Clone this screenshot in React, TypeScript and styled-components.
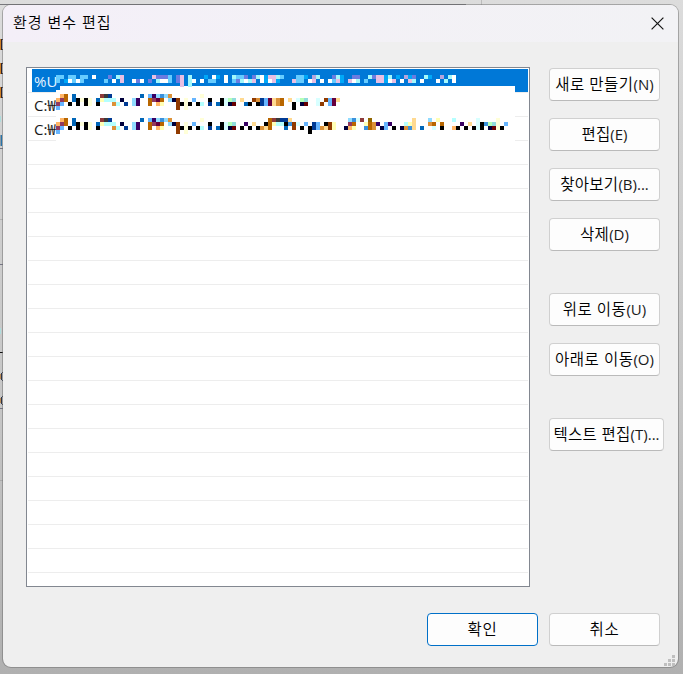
import React, {FC} from 'react'
import styled, {createGlobalStyle} from "styled-components";

interface CensorProps {
    lines: string[];
    top: number;
}

interface ButtonProps {
    $wide?: boolean;
    $primary?: boolean;
    $gap?: number;
    $spacing?: number;
}

const palette: Record<string, string> = {
    L: '#66ccff', A: '#00a8f8', W: '#ffffff', V: '#6c7ce0', O: '#b5a5dd', P: '#e8bfe2', C: '#a4f8fb',
    K: '#000000', k: '#3a3a3a', U: '#0066b8', N: '#003a94', n: '#00003c', D: '#380063', M: '#913a5e',
    m: '#66003c', R: '#903a00', r: '#8d3a3a', d: '#660000', B: '#b86600', o: '#dc9138', f: '#ffd990',
    F: '#ffb566', y: '#ffffd8', E: '#3a90dc', S: '#66b5ff', c: '#90dbff', a: '#b4ffff', t: '#d8ffff',
    g: '#b5ffb5', h: '#90dcdc', l: '#906600', Y: '#ffffb5',
}

// every token is "column:cells", a cell is 4px wide
const selectedCells = [
    '0:LL 3:LL 6:LL 9:W 13:V 15:CP 24:PVVVL 30:VP 33:C 37:A 39:WA 42:W 44:CLLV 49:VCWAPPCL 60:LLA 64:OC 69:VCA 74:VV 78:CVPPAC 85:A 87:OAV 92:CA 96:O 98:CW',
    '0:L 2:AWLWL 12:L 14:W 16:P 19:WVW 23:V 25:CWWL 30:VP 33:CW 36:W 38:LL 42:W 44:LVCWCP 51:WAWPA 59:PLL 63:WP 66:W 68:WLPA 73:PWC 77:L 80:PPAWP 86:W 88:PC 91:W 95:W 97:C 99:W',
    '31:P 33:C',
]

const pathStart = [
    '1:FB 4:U 11:rkN 21:U 23:SDcEc 28:o 36:y',
    '0:FMB 4:UKyKy 10:UYaaa 16:n 19:cD 23:BMmB 28:cnR 32:y 34:S 38:K 41:Ktgh',
    '0:MS 3:K 5:K 7:Ky 10:K 14:oa 17:N 19:cD 23:B 25:FY 30:RKyK 35:Ka 38:N 40:UKtnd',
    '0:S 30:R 32:y',
]

const firstPath = [
    '',
    '46:f 49:RoNSmfoB 58:f 60:tgh 65:t 67:RSmf',
    '47:UK 50:KNSmfoB 59:K 61:nd 65:tR 68:Sm',
    '59:K',
]

const secondPath = [
    '53:BrkNNf 73:cEt 76:r 78:l 89:f 93:c 95:Y 99:a 105:t 110:y',
    '47:D 49:f 52:KBYaaKER 60:t 62:S 64:NS 67:KRY 73:MB 77:YBoD 82:SD 87:aYf 93:oB 96:B 101:D 103:f 105:tKEghy 112:S',
    '46:K 48:K 50:KofB 57:U 59:R 61:K 63:KNSofRY 72:nFY 77:EBo 81:nS 84:K 86:noEf 91:U 94:t 96:K 99:FK 102:K 104:KtK 108:ndyK',
    '63:K',
]

const Censor: FC<CensorProps> = ({lines, top}) => (
    <>
        {lines.map((line, row) => line.split(' ').filter(Boolean).map(token => {
            const [start, cells] = token.split(':')
            return cells.split('').map((cell, i) => (
                <rect
                    key={`${row}-${start}-${i}`}
                    x={(Number(start) + i) * 4}
                    y={top + row * 4}
                    width={4}
                    height={4}
                    fill={palette[cell]}
                />
            ))
        }))}
    </>
)

const App: FC = () => {
    return (
        <>
            <GlobalStyle/>
            <Desktop>
                <Behind width="683" height="674" shapeRendering="crispEdges">
                    <rect x="0" y="4" width="466" height="1" fill="#77777c"/>
                    <rect x="481" y="0" width="1" height="5" fill="#bcbcbc"/>
                    {[39, 63, 87].map(y => (
                        <g key={y}>
                            <rect x="0" y={y} width="1" height="11" fill="#d08024"/>
                            <rect x="1" y={y} width="1" height="11" fill="#2c2430"/>
                            <rect x="2" y={y} width="1" height="1" fill="#2c2430"/>
                            <rect x="2" y={y + 10} width="1" height="1" fill="#2c2430"/>
                        </g>
                    ))}
                    <rect x="0" y="116" width="1" height="6" fill="#addcdc"/>
                    <rect x="0" y="135" width="1" height="11" fill="#8a9aa5"/>
                    <rect x="1" y="135" width="1" height="11" fill="#2673aa"/>
                    <rect x="0" y="148" width="3" height="1" fill="#747483"/>
                    <rect x="0" y="219" width="3" height="1" fill="#b2b2b2"/>
                    <rect x="0" y="264" width="3" height="1" fill="#747483"/>
                    <rect x="0" y="328" width="1" height="6" fill="#addcdc"/>
                    <rect x="0" y="352" width="3" height="1" fill="#111111"/>
                    {[372, 396].map(y => (
                        <g key={y}>
                            <rect x="0" y={y + 2} width="1" height="5" fill="#b98a55"/>
                            <rect x="1" y={y + 1} width="1" height="7" fill="#2f3548"/>
                            <rect x="2" y={y} width="1" height="1" fill="#2f3548"/>
                            <rect x="2" y={y + 8} width="1" height="1" fill="#2f3548"/>
                        </g>
                    ))}
                    <rect x="0" y="408" width="3" height="1" fill="#747483"/>
                    <rect x="0" y="480" width="3" height="1" fill="#aaaaaa"/>
                </Behind>
                <Dialog>
                    <TitleBar>
                        <Title>환경 변수 편집</Title>
                        <CloseIcon viewBox="0 0 13 13">
                            <path d="M.6.6 12.4 12.4M12.4.6.6 12.4" stroke="#1a1a1a" strokeWidth="1.25"/>
                        </CloseIcon>
                    </TitleBar>
                    <Content>
                        <List>
                            <Row $selected>%U</Row>
                            <Row>C:₩</Row>
                            <Row>C:₩</Row>
                            {Array.from({length: 18}, (_, i) => <Row key={i}/>)}
                            <Mask width="460" height="70" shapeRendering="crispEdges">
                                <path d="M4 11H459V69H0V15H4Z" fill="#fff"/>
                                <Censor lines={selectedCells} top={0}/>
                                <Censor lines={pathStart} top={19}/>
                                <Censor lines={firstPath} top={19}/>
                                <Censor lines={pathStart} top={43}/>
                                <Censor lines={secondPath} top={43}/>
                            </Mask>
                        </List>
                        <Actions>
                            <Button $spacing={0.5}>새로 만들기<Key>(N)</Key></Button>
                            <Button $spacing={0.2}>편집<Key>(E)</Key></Button>
                            <Button $spacing={0.3}>찾아보기<Key>(B)...</Key></Button>
                            <Button $spacing={0.3}>삭제<Key>(D)</Key></Button>
                            <Button $gap={25} $spacing={0.5}>위로 이동<Key>(U)</Key></Button>
                            <Button $spacing={0.5}>아래로 이동<Key>(O)</Key></Button>
                            <Button $gap={25} $spacing={0.3} $wide>텍스트 편집<Key>(T)...</Key></Button>
                        </Actions>
                    </Content>
                    <Footer>
                        <Button $primary $spacing={0.8}>확인</Button>
                        <Button $spacing={0.8}>취소</Button>
                    </Footer>
                    <Grip width="11" height="11" shapeRendering="crispEdges">
                        <path d="M8 0h3v3h-3zM4 4h3v3h-3zM8 4h3v3h-3zM0 8h3v3h-3zM4 8h3v3h-3zM8 8h3v3h-3z" fill="#bfbfbf"/>
                    </Grip>
                </Dialog>
            </Desktop>
        </>
    )
}

export default App

const GlobalStyle = createGlobalStyle`
  * {
    box-sizing: border-box;
  }

  body {
    margin: 0;
    overflow: hidden;
    font-family: "Open Sans", "Noto Sans CJK KR", sans-serif;
    font-size: 15.5px;
    font-weight: 350;
    color: #000;
  }
`;

const Desktop = styled.div`
  position: relative;
  width: 683px;
  height: 674px;
  padding: 4px 4px 6px 2px;
  background: linear-gradient(180deg, #dcdcdc 0%, #d2d2d2 20%, #c6c6c6 60%, #b0b0b0 100%);
`;

const Behind = styled.svg`
  position: absolute;
  left: 0;
  top: 0;
`;

const Dialog = styled.div`
  position: relative;
  display: flex;
  flex-direction: column;
  width: 677px;
  height: 664px;
  border: 1px solid rgba(110, 110, 110, 0.5);
  border-radius: 9px;
  overflow: hidden;
  background: #efefef;
  background-clip: padding-box;
`;

const TitleBar = styled.div`
  display: flex;
  flex: none;
  align-items: center;
  justify-content: space-between;
  height: 37px;
  padding: 0 14px 0 10px;
  background: linear-gradient(90deg, #f4eff8, #f3f1f6 50%, #f2f2f5);
`;

const Title = styled.div`
  padding-bottom: 4px;
  font-size: 15px;
  line-height: 20px;
  letter-spacing: 1px;
  white-space: nowrap;
`;

const CloseIcon = styled.svg`
  width: 13px;
  height: 13px;
`;

const Content = styled.div`
  display: flex;
  gap: 19px;
  height: 545px;
  padding: 25px 0 0 23px;
`;

const List = styled.div`
  position: relative;
  width: 504px;
  height: 520px;
  padding: 1px;
  border: 1px solid #828790;
  background: #fff;
`;

const Row = styled.div<{$selected?: boolean}>`
  height: 24px;
  padding-left: 6px;
  border-bottom: 1px solid #ededed;
  font-size: 15px;
  font-weight: 400;
  line-height: 25px;
  color: ${props => props.$selected ? '#e8f4ff' : '#1a1a1a'};
  background: ${props => props.$selected ? 'linear-gradient(#0078d7, #0078d7) 4px 0 no-repeat' : 'none'};
`;

const Mask = styled.svg`
  position: absolute;
  left: 29px;
  top: 7px;
`;

const Actions = styled.div`
  display: flex;
  flex-direction: column;
  gap: 17px;
  padding-top: 1px;
`;

const Button = styled.button<ButtonProps>`
  flex: none;
  width: ${props => props.$wide ? 115 : 111}px;
  height: 33px;
  margin: ${props => props.$gap || 0}px 0 0;
  padding: 0;
  border: 1px solid ${props => props.$primary ? '#0070c8' : '#d0d0d0'};
  border-bottom-color: ${props => props.$primary ? '#0070c8' : '#bababa'};
  border-radius: 4px;
  background: #fdfdfd;
  font: inherit;
  line-height: 29px;
  letter-spacing: ${props => props.$spacing || 0}px;
  white-space: nowrap;
  color: #000;
`;

const Key = styled.span`
  font-size: 15px;
  font-weight: 400;
  letter-spacing: 0;
  color: #1a1a1a;
`;

const Footer = styled.div`
  display: flex;
  justify-content: flex-end;
  gap: 11px;
  padding: 26px 18px 0 0;
`;

const Grip = styled.svg`
  position: absolute;
  right: 3px;
  bottom: 1px;
`;
